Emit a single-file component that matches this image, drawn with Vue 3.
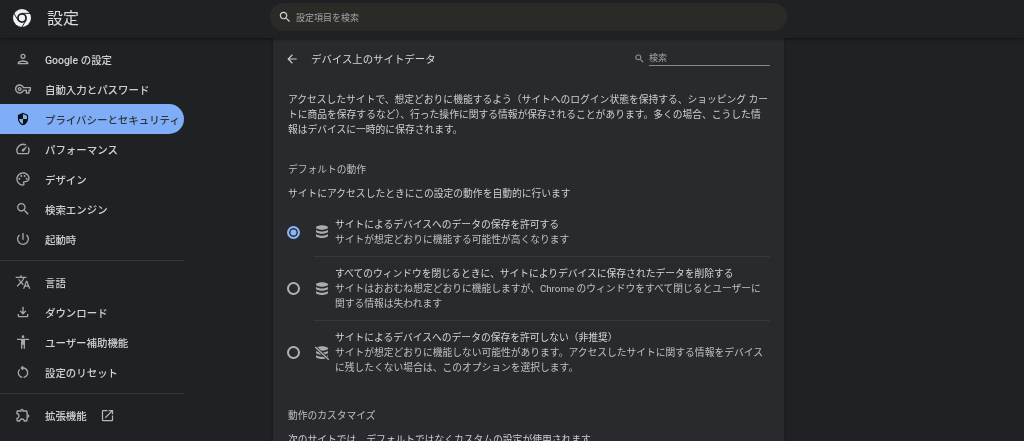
<script setup>
const search = 'M15.5 14h-.79l-.28-.27C15.41 12.59 16 11.11 16 9.5 16 5.91 13.09 3 9.5 3S3 5.91 3 9.5 5.91 16 9.5 16c1.61 0 3.09-.59 4.23-1.57l.27.28v.79l5 4.99L20.49 19l-4.99-5zm-6 0C7.01 14 5 11.99 5 9.5S7.01 5 9.5 5 14 7.01 14 9.5 11.99 14 9.5 14z'
const groups = [
  [
    { label: 'Google の設定', d: 'M12 6c1.1 0 2 .9 2 2s-.9 2-2 2-2-.9-2-2 .9-2 2-2m0 10c2.7 0 5.8 1.29 6 2H6c.23-.72 3.31-2 6-2m0-12C9.79 4 8 5.79 8 8s1.79 4 4 4 4-1.79 4-4-1.79-4-4-4zm0 10c-2.67 0-8 1.34-8 4v2h16v-2c0-2.66-5.33-4-8-4z' },
    { label: '自動入力とパスワード', d: 'M22 19h-6v-4h-2.68c-1.14 2.42-3.6 4-6.32 4-3.86 0-7-3.14-7-7s3.14-7 7-7c2.72 0 5.17 1.58 6.32 4H24v6h-2v4zm-4-2h2v-4h2v-2H11.94l-.23-.67C11.01 8.34 9.11 7 7 7c-2.76 0-5 2.24-5 5s2.24 5 5 5c2.11 0 4.01-1.34 4.71-3.33l.23-.67H18v4zM7 15c-1.65 0-3-1.35-3-3s1.35-3 3-3 3 1.35 3 3-1.35 3-3 3zm0-4c-.55 0-1 .45-1 1s.45 1 1 1 1-.45 1-1-.45-1-1-1z' },
    { label: 'プライバシーとセキュリティ', active: true, d: 'M12 1 3 5v6c0 5.55 3.84 10.74 9 12 5.16-1.26 9-6.45 9-12V5l-9-4zm0 10.99h7c-.53 4.12-3.28 7.79-7 8.94V12H5V6.3l7-3.11v8.8z' },
    { label: 'パフォーマンス', d: 'M20.38 8.57l-1.23 1.85a8 8 0 0 1-.22 7.58H5.07A8 8 0 0 1 15.58 6.85l1.85-1.23A10 10 0 0 0 3.35 19a2 2 0 0 0 1.72 1h13.85a2 2 0 0 0 1.74-1 10 10 0 0 0-.27-10.44zm-9.79 6.84a2 2 0 0 0 2.83 0l5.66-8.49-8.49 5.66a2 2 0 0 0 0 2.83z' },
    { label: 'デザイン', d: 'M12 22C6.49 22 2 17.51 2 12S6.49 2 12 2s10 4.04 10 9c0 3.31-2.69 6-6 6h-1.77c-.28 0-.5.22-.5.5 0 .12.05.23.13.33.41.47.64 1.06.64 1.67A2.5 2.5 0 0 1 12 22zm0-18c-4.41 0-8 3.59-8 8s3.59 8 8 8c.28 0 .5-.22.5-.5a.54.54 0 0 0-.14-.35c-.41-.46-.63-1.05-.63-1.65a2.5 2.5 0 0 1 2.5-2.5H16c2.21 0 4-1.79 4-4 0-3.86-3.59-7-8-7zM6.5 10a1.500 1.500 0 1 0 0 3 1.500 1.500 0 0 0 0-3zm3-4a1.500 1.500 0 1 0 0 3 1.500 1.500 0 0 0 0-3zm5 0a1.500 1.500 0 1 0 0 3 1.500 1.500 0 0 0 0-3zm3 4a1.500 1.500 0 1 0 0 3 1.500 1.500 0 0 0 0-3z' },
    { label: '検索エンジン', d: search },
    { label: '起動時', d: 'M13 3h-2v10h2V3zm4.83 2.17l-1.42 1.42A6.92 6.92 0 0 1 19 12c0 3.87-3.13 7-7 7A6.995 6.995 0 0 1 7.58 6.58L6.17 5.17A8.932 8.932 0 0 0 3 12a9 9 0 0 0 18 0c0-2.74-1.23-5.18-3.17-6.83z' },
  ],
  [
    { label: '言語', d: 'M12.87 15.07l-2.54-2.51.03-.03c1.74-1.94 2.98-4.17 3.71-6.53H17V4h-7V2H8v2H1v1.99h11.17C11.5 7.92 10.44 9.75 9 11.35 8.07 10.32 7.3 9.19 6.69 8h-2c.73 1.63 1.73 3.17 2.98 4.56l-5.09 5.02L4 19l5-5 3.11 3.11.76-2.04zM18.5 10h-2L12 22h2l1.12-3h4.75L21 22h2l-4.5-12zm-2.62 7l1.62-4.33L19.12 17h-3.24z' },
    { label: 'ダウンロード', d: 'M18 15v3H6v-3H4v3c0 1.1.9 2 2 2h12c1.1 0 2-.9 2-2v-3h-2zm-1-4l-1.41-1.41L13 12.17V4h-2v8.17L8.41 9.59 7 11l5 5 5-5z' },
    { label: 'ユーザー補助機能', d: 'M12 2c1.1 0 2 .9 2 2s-.9 2-2 2-2-.9-2-2 .9-2 2-2zm9 7h-6v13h-2v-6h-2v6H9V9H3V7h18v2z' },
    { label: '設定のリセット', d: 'M6 13c0-1.65.67-3.15 1.76-4.24L6.34 7.34A7.95 7.95 0 0 0 4 13c0 4.08 3.05 7.44 7 7.93v-2.02c-2.83-.48-5-2.94-5-5.91zm14 0c0-4.42-3.58-8-8-8-.06 0-.12.01-.18.01l1.09-1.09L11.5 2.5 8 6l3.5 3.5 1.41-1.41-1.08-1.08c.06 0 .12-.01.17-.01 3.31 0 6 2.69 6 6 0 2.97-2.17 5.43-5 5.91v2.02c3.95-.49 7-3.85 7-7.93z' },
  ],
  [
    { label: '拡張機能', d: 'M10.5 4.5c.28 0 .5.22.5.5v2h6v6h2c.28 0 .5.22.5.5s-.22.5-.5.5h-2v6h-2.12c-.68-1.75-2.39-3-4.38-3s-3.7 1.25-4.38 3H4v-2.120c1.75-.68 3-2.39 3-4.38 0-1.99-1.24-3.7-2.99-4.38L4 7h6V5c0-.28.22-.5.5-.5m0-2A2.5 2.5 0 0 0 8 5H4c-1.1 0-1.99.9-1.99 2v3.8h.29c1.49 0 2.7 1.21 2.7 2.7s-1.21 2.7-2.7 2.7H2V20c0 1.1.9 2 2 2h3.8v-.3c0-1.49 1.21-2.7 2.7-2.7 1.49 0 2.7 1.21 2.7 2.7v.3H17c1.1 0 2-.9 2-2v-4c1.38 0 2.5-1.12 2.5-2.5S20.38 11 19 11V7c0-1.1-.9-2-2-2h-4c0-1.38-1.12-2.5-2.5-2.5z', external: true },
  ],
]
const db = 'M12 3C7.6 3 4 4.3 4 6s3.6 3 8 3 8-1.3 8-3-3.6-3-8-3zM4 8.200v3c0 1.700 3.600 3 8 3s8-1.300 8-3v-3c0 1.700-3.600 3-8 3s-8-1.300-8-3zm0 5.800v3c0 1.700 3.600 3 8 3s8-1.300 8-3v-3c0 1.700-3.600 3-8 3s-8-1.300-8-3z'
const options = [
  { title: 'サイトによるデバイスへのデータの保存を許可する', lines: ['サイトが想定どおりに機能する可能性が高くなります'], checked: true },
  { title: 'すべてのウィンドウを閉じるときに、サイトによりデバイスに保存されたデータを削除する', lines: ['サイトはおおむね想定どおりに機能しますが、Chrome のウィンドウをすべて閉じるとユーザーに', '関する情報は失われます'] },
  { title: 'サイトによるデバイスへのデータの保存を許可しない（非推奨）', lines: ['サイトが想定どおりに機能しない可能性があります。アクセスしたサイトに関する情報をデバイス', 'に残したくない場合は、このオプションを選択します。'], off: true },
]
</script>

<template>
  <div class="page">
    <header class="topbar">
      <div class="brand">
        <svg class="logo" viewBox="0 0 24 24">
          <circle cx="12" cy="12" r="12" fill="#f1f3f4"/>
          <circle cx="12" cy="12" r="6.600" fill="#202124"/>
          <circle cx="12" cy="12" r="4.200" fill="#f1f3f4"/>
          <path d="M12 5.800h11M6.600 15 1.500 6.300M17.400 15l-5.500 9" stroke="#202124" stroke-width="1.300" fill="none"/>
        </svg>
        <span class="brand-title">設定</span>
      </div>
      <div class="searchbar">
        <svg class="search-icon" viewBox="0 0 24 24"><path fill="#d0d2d5" :d="search"/></svg>
        <span>設定項目を検索</span>
      </div>
    </header>

    <div class="body">
      <nav class="sidebar">
        <div v-for="(group, g) in groups" :key="g" class="nav-group">
          <div v-for="item in group" :key="item.label" class="nav-item" :class="{ active: item.active }">
            <svg class="nav-icon" viewBox="0 0 24 24"><path fill="currentColor" :d="item.d" /></svg>
            <span class="nav-label">{{ item.label }}</span>
            <svg v-if="item.external" class="ext" viewBox="0 0 24 24"><path fill="currentColor" d="M19 19H5V5h7V3H5a2 2 0 0 0-2 2v14a2 2 0 0 0 2 2h14a2 2 0 0 0 2-2v-7h-2v7zM14 3v2h3.590l-9.830 9.830 1.410 1.410L19 6.410V10h2V3h-7z"/></svg>
          </div>
        </div>
      </nav>

      <main class="card">
        <div class="card-head">
          <svg class="back" viewBox="0 0 24 24"><path fill="#c8cacd" d="M20 11H7.830l5.590-5.590L12 4l-8 8 8 8 1.410-1.410L7.830 13H20v-2z"/></svg>
          <h1 class="card-title">デバイス上のサイトデータ</h1>
          <div class="filter">
            <svg class="filter-icon" viewBox="0 0 24 24"><path fill="#a9abae" :d="search"/></svg>
            <span class="filter-input">検索</span>
          </div>
        </div>

        <p class="intro">アクセスしたサイトで、想定どおりに機能するよう（サイトへのログイン状態を保持する、ショッピング カー<br>トに商品を保存するなど）、行った操作に関する情報が保存されることがあります。多くの場合、こうした情<br>報はデバイスに一時的に保存されます。</p>

        <h2 class="section">デフォルトの動作</h2>
        <p class="sub">サイトにアクセスしたときにこの設定の動作を自動的に行います</p>

        <div class="options">
          <div v-for="o in options" :key="o.title" class="option">
            <span class="radio" :class="{ checked: o.checked }"></span>
            <div class="option-inner">
              <svg class="db" viewBox="0 0 24 24">
                <path fill="#a9abae" :d="db" />
                <path v-if="o.off" d="M3 4 21 21" stroke="#292a2d" stroke-width="4" />
                <path v-if="o.off" d="M3 4 21 21" stroke="#a9abae" stroke-width="2" />
              </svg>
              <div class="option-text">
                <div>{{ o.title }}</div>
                <div v-for="l in o.lines" :key="l" class="secondary">{{ l }}</div>
              </div>
            </div>
          </div>
        </div>

        <h2 class="section custom">動作のカスタマイズ</h2>
        <p class="sub custom-sub">次のサイトでは、デフォルトではなくカスタムの設定が使用されます</p>
      </main>
    </div>
  </div>
</template>

<style>
html, body { margin: 0; background: #202124; overflow: hidden; }
</style>

<style scoped>
.page {
  width: 1024px;
  height: 441px;
  overflow: hidden;
  background: #202124;
  color: #d5d7da;
  font-family: Roboto, "Noto Sans CJK JP", sans-serif;
  display: flex;
  flex-direction: column;
  filter: blur(.3px);
}
.topbar {
  height: 38px;
  flex: none;
  display: flex;
  align-items: center;
  background: #202124;
  box-shadow: 0 1px 3px rgba(0, 0, 0, .45);
  position: relative;
  z-index: 1;
}
.brand {
  width: 270px;
  flex: none;
  display: flex;
  align-items: center;
  padding-left: 13px;
  box-sizing: border-box;
}
.logo { width: 18px; height: 18px; margin-right: 17px; margin-top: -2px; }
.brand-title { font-size: 16px; color: #d8dadd; line-height: 20px; margin-top: -1px; margin-left: -1px; }
.searchbar {
  width: 517px;
  height: 28px;
  margin-top: -4px;
  border-radius: 14px;
  background: #2a2a26;
  display: flex;
  align-items: center;
  padding-left: 8px;
  box-sizing: border-box;
  font-size: 9px;
  color: #a4a6a8;
}
.search-icon { width: 14px; height: 14px; margin-right: 4px; }
.body { flex: 1; display: flex; min-height: 0; }
.sidebar {
  width: 184px;
  flex: none;
  margin-right: 89px;
  padding-top: 6px;
}
.nav-group + .nav-group {
  margin-top: 6px;
  padding-top: 6px;
  border-top: 1px solid #35363a;
}
.nav-item {
  height: 30px;
  display: flex;
  align-items: center;
  font-size: 10.45px;
  font-weight: 500;
  color: #cfd1d4;
  padding-left: 15px;
  border-radius: 0 15px 15px 0;
  white-space: nowrap;
}
.nav-item.active { background: #7fadf7; color: #303338; }
.nav-item.active .nav-icon { color: #0f1114; transform: scale(-.85, .85); }
.nav-icon { width: 16px; height: 16px; flex: none; margin-right: 14px; color: #a6a8ab; }
.ext { width: 15px; height: 15px; margin-left: 13px; color: #b4b6b9; }
.card {
  width: 511px;
  flex: none;
  background: #292a2d;
  padding: 0 14px 0 15px;
  box-sizing: border-box;
  font-size: 9.78px;
  line-height: 15px;
  color: #cdcfd2;
  box-shadow: 0 0 3px rgba(0, 0, 0, .3);
}
.card-head { height: 42px; display: flex; align-items: center; }
.back { width: 14px; height: 14px; margin-left: -3px; margin-right: 12px; }
.card-title { margin: 0; font-size: 10.42px; font-weight: 400; color: #d5d7da; }
.filter { margin-left: auto; display: flex; align-items: center; }
.filter-icon { width: 11px; height: 11px; margin-right: 4px; margin-top: -1px; }
.filter-input {
  width: 121px;
  font-size: 9px;
  line-height: 13px;
  color: #a4a6a8;
  border-bottom: 1px solid #85878a;
  margin-top: 0;
}
.intro { margin: 12px 0 0; white-space: nowrap; }
.section { margin: 25px 0 0; font-size: 9.75px; font-weight: 400; line-height: 15px; color: #bdbfc2; }
.sub { margin: 9px 0 0; white-space: nowrap; }
.options { margin-top: 16px; }
.option { display: flex; align-items: center; }
.option:first-child { margin-bottom: 9px; }
.radio {
  width: 9px;
  height: 9px;
  flex: none;
  border: 2px solid #b0b2b5;
  border-radius: 50%;
  margin-left: -1px;
  margin-right: 14px;
  box-sizing: content-box;
  background-clip: padding-box;
}
.radio.checked {
  border-color: #8ab4f8;
  background: #8ab4f8;
  box-shadow: inset 0 0 0 1.500px #292a2d;
}
.option-inner {
  flex: 1;
  display: flex;
  align-items: center;
  padding: 9px 0;
  white-space: nowrap;
}
.option + .option .option-inner { border-top: 1px solid #37383b; }
.option:first-child .option-inner { padding: 0; }
.db { width: 18px; height: 18px; flex: none; margin-left: -1px; margin-right: 4px; }
.option-text { color: #d5d7da; }
.secondary { color: #bfc1c4; }
.custom { margin-top: 24px; }
.custom-sub { margin-top: 9px; }
</style>
